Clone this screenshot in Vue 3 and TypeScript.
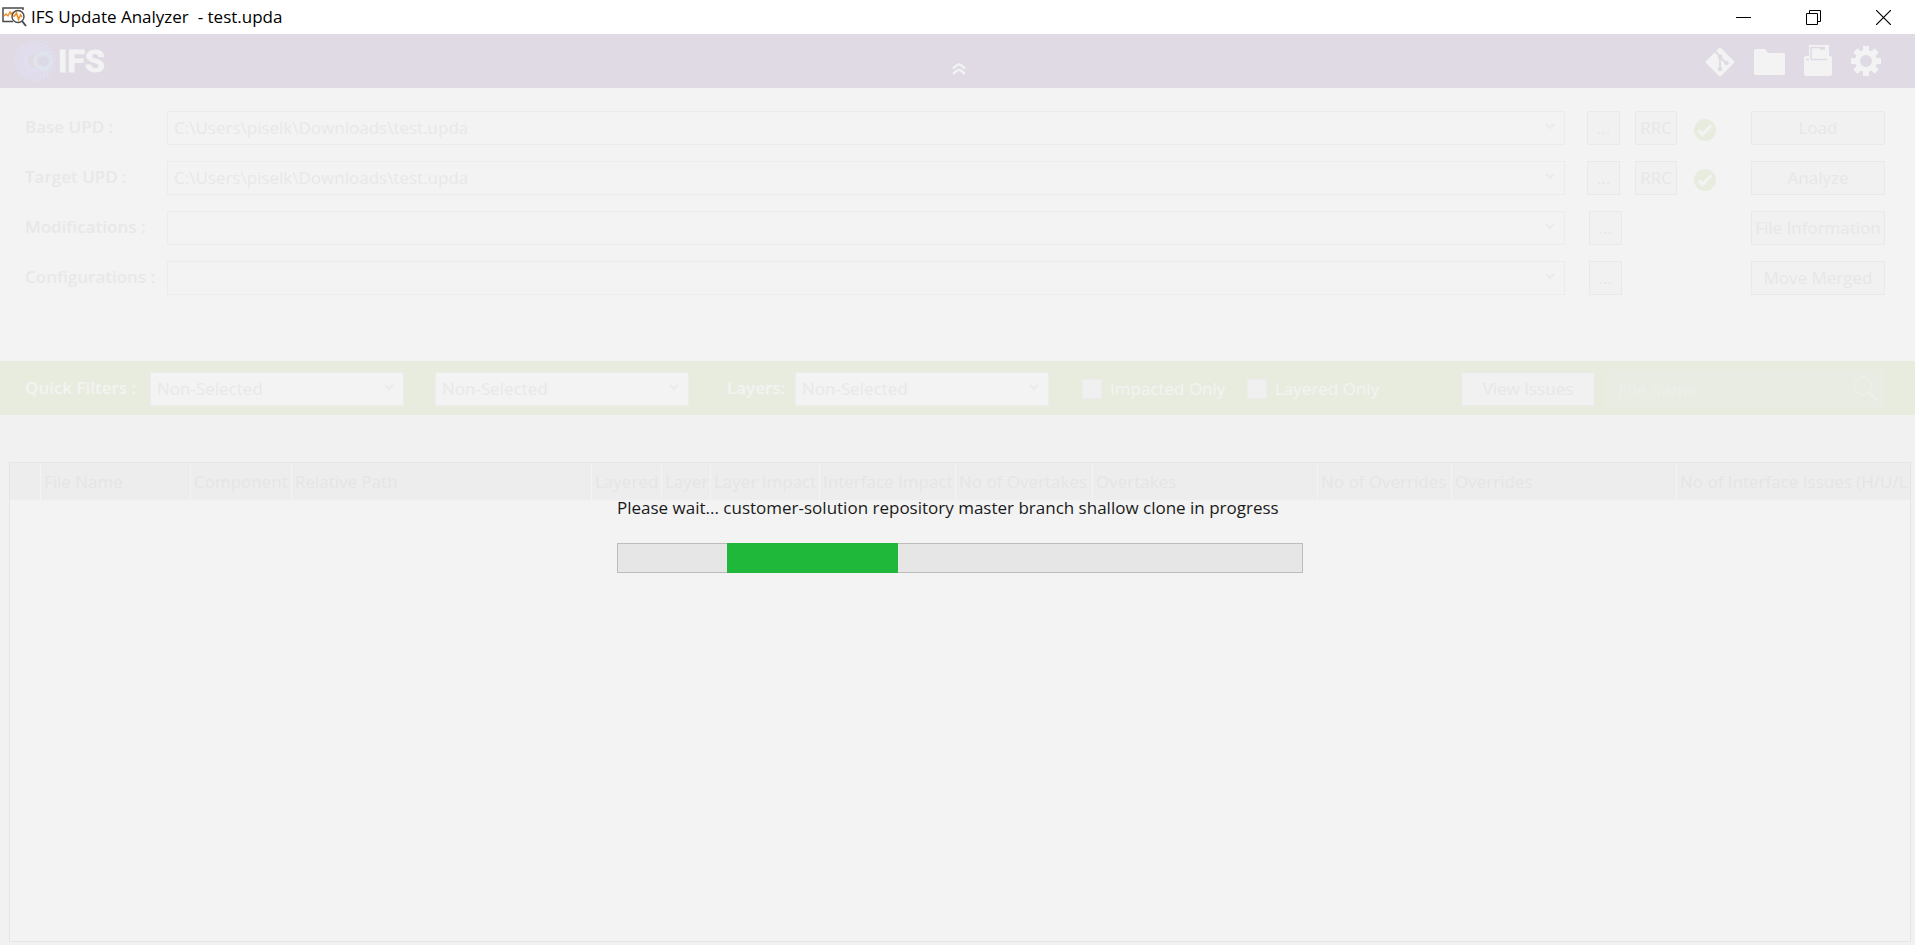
<script setup lang="ts">
import { ref } from 'vue'

interface PathRow {
  id: string
  label: string
  value: string
  release: string
}

interface Column {
  title: string
  width: string
}

const windowTitle = 'IFS Update Analyzer  - test.upda'

const rows: PathRow[] = [
  { id: 'base', label: 'Base UPD :', value: 'C:\\Users\\piselk\\Downloads\\test.upda', release: 'RRC' },
  { id: 'target', label: 'Target UPD :', value: 'C:\\Users\\piselk\\Downloads\\test.upda', release: 'RRC' },
  { id: 'modifications', label: 'Modifications :', value: '', release: '' },
  { id: 'configurations', label: 'Configurations :', value: '', release: '' },
]

const actions: string[] = ['Load', 'Analyze', 'File Information', 'Move Merged']

const columns: Column[] = [
  { title: '', width: '31px' },
  { title: 'File Name', width: '150px' },
  { title: 'Component', width: '101px' },
  { title: 'Relative Path', width: '300px' },
  { title: 'Layered', width: '70px' },
  { title: 'Layer', width: '49px' },
  { title: 'Layer Impact', width: '109px' },
  { title: 'Interface Impact', width: '136px' },
  { title: 'No of Overtakes', width: '137px' },
  { title: 'Overtakes', width: '225px' },
  { title: 'No of Overrides', width: '134px' },
  { title: 'Overrides', width: '225px' },
  { title: 'No of Interface Issues (H/U/L', width: 'auto' },
]

const rays: number[] = Array.from({ length: 28 }, (_, i) => (i * 360) / 28)
const teeth: number[] = [0, 45, 90, 135, 180, 225, 270, 315]

const fileName = ref('')
const impactedOnly = ref(false)
const layeredOnly = ref(false)
</script>

<template>
  <div class="window">
    <header class="titlebar">
      <svg class="app-icon" width="25" height="20" viewBox="0 0 25 20" fill="none">
        <path d="M11 14.500H1V1h20v2" stroke="#4a4a4a" stroke-width="1.500" />
        <path d="M2 9l2-2 2 2 2-4 1 2 2-2" stroke="#f08a1d" stroke-width="1.300" />
        <circle cx="16" cy="9.500" r="6" fill="#fff" stroke="#4a4a4a" stroke-width="1.400" />
        <path d="M20 14l4 5" stroke="#4a4a4a" stroke-width="2" />
        <path d="M11 9h1.500l2-3 2 6.500 2-4.500 1.500 2" stroke="#f08a1d" stroke-width="1.500" />
      </svg>
      <h1 class="title">{{ windowTitle }}</h1>
      <div class="window-buttons">
        <button type="button" aria-label="Minimize">
          <svg width="15" height="15" viewBox="0 0 15 15"><path d="M0 7.500h15" stroke="#000" /></svg>
        </button>
        <button type="button" aria-label="Restore">
          <svg width="15" height="15" viewBox="0 0 15 15" fill="none" stroke="#000">
            <path d="M.5 3.500h11v11H.5zM3.500 3.500v-3h11v11h-3" />
          </svg>
        </button>
        <button type="button" aria-label="Close">
          <svg width="15" height="15" viewBox="0 0 15 15"><path d="M0 0l15 15M15 0L0 15" stroke="#000" stroke-width="1.200" /></svg>
        </button>
      </div>
    </header>

    <div class="brandbar">
      <div class="logo">
        <svg width="42" height="42" viewBox="-21 -21 42 42">
          <path
            v-for="angle in rays"
            :key="angle"
            :transform="`rotate(${angle})`"
            d="M5 -5Q12 -9 20 -4"
            fill="none"
            stroke="#e2def0"
            stroke-width="2"
          />
          <circle cx="8" cy="0" r="8" fill="none" stroke="#dfe3ec" stroke-width="4" />
          <circle cx="9" cy="0" r="5" fill="#dcd9e6" />
        </svg>
        <span class="logo-text">IFS</span>
      </div>
      <button class="collapse" type="button" aria-label="Collapse">
        <svg width="14" height="12" viewBox="0 0 14 12" fill="none" stroke="#f3f3f3" stroke-width="2.500">
          <path d="M1 5.500Q6 1 7 1.500Q8 1 13 5.500M1 11Q6 6.500 7 7Q8 6.500 13 11" />
        </svg>
      </button>
      <div class="tools">
        <button class="git" type="button" aria-label="Git">
          <svg width="30" height="30" viewBox="0 0 30 30">
            <rect x="4.500" y="4.500" width="21" height="21" rx="1" transform="rotate(45 15 15)" fill="#f3f3f3" />
            <path d="M10 4l5 5.500v12.500M15 10l6 6" fill="none" stroke="#dfdae3" stroke-width="2" />
            <circle cx="15" cy="9.500" r="2.200" fill="#dfdae3" />
            <circle cx="15" cy="22" r="2.300" fill="#dfdae3" />
            <circle cx="21.500" cy="16" r="2.300" fill="#dfdae3" />
          </svg>
        </button>
        <button type="button" aria-label="Open folder">
          <svg width="31" height="26" viewBox="0 0 31 26">
            <path d="M2 0h9l3 4h15q2 0 2 2v18q0 2-2 2H2q-2 0-2-2V2q0-2 2-2z" fill="#f3f3f3" />
          </svg>
        </button>
        <button class="archive" type="button" aria-label="Archive">
          <svg width="28" height="31" viewBox="0 0 28 31">
            <path d="M5 0h20v11h1q2 0 2 2v16q0 2-2 2H2q-2 0-2-2V13q0-2 2-2h3z" fill="#f3f3f3" />
            <path d="M2 14.500h3M7 14.500h16M7 14V2.500h14M16 4h5" fill="none" stroke="#dfdae3" stroke-width="1.500" />
          </svg>
        </button>
        <button type="button" aria-label="Settings">
          <svg width="30" height="30" viewBox="-15 -15 30 30" fill="#f3f3f3">
            <path v-for="angle in teeth" :key="angle" :transform="`rotate(${angle})`" d="M-3 -15h6v6h-6z" />
            <circle r="8.500" fill="none" stroke="#f3f3f3" stroke-width="5" />
          </svg>
        </button>
      </div>
    </div>

    <section class="sources">
      <div class="rows">
        <div v-for="row in rows" :key="row.id" class="row">
          <label class="row-label" :for="row.id">{{ row.label }}</label>
          <div class="combo grow">
            <select :id="row.id">
              <option>{{ row.value }}</option>
            </select>
            <svg class="chevron" width="10" height="7" viewBox="0 0 10 7"><path d="M1 1l4 4 4-4" /></svg>
          </div>
          <div class="row-tools" :class="{ short: !row.release }">
            <button class="plain browse" type="button" :aria-label="`Browse ${row.label}`">...</button>
            <template v-if="row.release">
              <button class="plain release" type="button">{{ row.release }}</button>
              <svg class="ok" width="22" height="22" viewBox="0 0 22 22">
                <circle cx="11" cy="11" r="11" fill="#e8ecdf" />
                <path d="M4.500 11.500l4 4 8.500-9" fill="none" stroke="#f3f3f3" stroke-width="3.200" />
              </svg>
            </template>
          </div>
        </div>
      </div>
      <div class="actions">
        <button v-for="action in actions" :key="action" class="plain" type="button">{{ action }}</button>
      </div>
    </section>

    <section class="filters">
      <label class="filter-label quick" for="quick-one">Quick Filters :</label>
      <div class="combo filter">
        <select id="quick-one"><option>Non-Selected</option></select>
        <svg class="chevron" width="10" height="7" viewBox="0 0 10 7"><path d="M1 1l4 4 4-4" /></svg>
      </div>
      <div class="combo filter second">
        <select aria-label="Second quick filter"><option>Non-Selected</option></select>
        <svg class="chevron" width="10" height="7" viewBox="0 0 10 7"><path d="M1 1l4 4 4-4" /></svg>
      </div>
      <label class="filter-label layers" for="layers">Layers:</label>
      <div class="combo filter">
        <select id="layers"><option>Non-Selected</option></select>
        <svg class="chevron" width="10" height="7" viewBox="0 0 10 7"><path d="M1 1l4 4 4-4" /></svg>
      </div>
      <label class="check impacted"><input v-model="impactedOnly" type="checkbox" />Impacted Only</label>
      <label class="check"><input v-model="layeredOnly" type="checkbox" />Layered Only</label>
      <button class="plain view" type="button">View Issues</button>
      <div class="search">
        <input v-model="fileName" type="text" placeholder="File name" aria-label="File name" />
        <svg width="26" height="26" viewBox="0 0 26 26" fill="none" stroke="#edf0e8">
          <circle cx="10" cy="10" r="8.500" stroke-width="1.500" />
          <path d="M16 16l8 9" stroke-width="2.500" />
        </svg>
      </div>
    </section>

    <main class="results">
      <div class="grid">
        <table>
          <colgroup>
            <col v-for="column in columns" :key="column.title" :style="{ width: column.width }" />
          </colgroup>
          <thead>
            <tr>
              <th v-for="column in columns" :key="column.title" scope="col">{{ column.title }}</th>
            </tr>
          </thead>
        </table>
      </div>
    </main>

    <div class="overlay">
      <div class="progress-box" role="status">
        <p>Please wait... customer-solution repository master branch shallow clone in progress</p>
        <div class="track" role="progressbar" aria-label="Clone progress"><div class="chunk"></div></div>
      </div>
    </div>
  </div>
</template>

<style>
body {
  margin: 0;
}
</style>

<style scoped>
.window {
  position: relative;
  display: flex;
  flex-direction: column;
  box-sizing: border-box;
  min-height: 100vh;
  background: #f1f1f1;
  color: #e7e7e7;
  font-family: 'Open Sans', 'Noto Sans', sans-serif;
  font-size: 17px;
  line-height: 24px;
}

.window *,
.window *::before {
  box-sizing: border-box;
}

button,
select,
input {
  margin: 0;
  padding: 0;
  border: 0;
  border-radius: 0;
  background: none;
  color: inherit;
  font: inherit;
}

svg {
  display: block;
  flex: none;
}

.titlebar {
  display: flex;
  align-items: center;
  height: 34px;
  padding-left: 2px;
  background: #fff;
  color: #000;
}

.title {
  margin: 0 auto 0 4px;
  font-size: 17px;
  font-weight: 400;
  white-space: pre;
}

.window-buttons {
  display: flex;
}

.window-buttons button {
  display: grid;
  place-items: center;
  width: 70px;
  height: 34px;
}

.window-buttons button:last-child {
  width: 64px;
  margin-left: 3px;
}

.brandbar {
  display: grid;
  grid-template-columns: 1fr auto 1fr;
  align-items: center;
  height: 54px;
  padding: 0 34px 0 14px;
  background: #dfdae3;
  color: #f3f3f3;
}

.logo {
  display: flex;
  align-items: center;
  gap: 2px;
}

.logo-text {
  font-family: Roboto, sans-serif;
  font-size: 32px;
  font-weight: 700;
  line-height: 40px;
  -webkit-text-stroke: 1px #f3f3f3;
}

.collapse {
  padding: 16px 0 0 23px;
}

.tools {
  display: flex;
  justify-content: flex-end;
  align-items: center;
  gap: 19px;
}

.tools .git,
.tools button:nth-child(2) {
  padding-top: 2px;
}

.tools .archive {
  padding-bottom: 2px;
}

.sources {
  display: flex;
  align-items: flex-start;
  height: 273px;
  padding: 23px 30px 0 25px;
  background: #f3f3f3;
}

.rows {
  display: flex;
  flex: 1;
  flex-direction: column;
  gap: 16px;
}

.row {
  display: flex;
  align-items: center;
}

.row-label {
  width: 142px;
  padding-bottom: 2px;
  color: #e8e8e8;
  font-weight: 600;
}

.combo {
  position: relative;
}

.grow {
  flex: 1;
}

.combo select {
  display: block;
  width: 100%;
  height: 34px;
  padding: 0 30px 0 6px;
  border: 1px solid #ececec;
  background: #f3f3f3;
  color: #e8e8e8;
  appearance: none;
  opacity: 1;
}

.chevron {
  position: absolute;
  top: 12px;
  right: 10px;
  fill: none;
  stroke: #ebebeb;
  stroke-width: 2;
  pointer-events: none;
}

.row-tools {
  display: flex;
  align-items: center;
  width: 186px;
  padding-left: 22px;
}

.row-tools.short {
  padding-left: 24px;
}

.plain {
  height: 34px;
  border: 1px solid #e9e9e9;
  background: #f1f1f1;
  color: #e7e7e7;
  white-space: nowrap;
}

.browse {
  width: 33px;
}

.release {
  width: 42px;
  margin: 0 17px 0 15px;
}

.ok {
  margin-top: 4px;
}

.actions {
  display: flex;
  flex-direction: column;
  gap: 16px;
  width: 134px;
}

.filters {
  display: flex;
  align-items: center;
  height: 54px;
  padding: 2px 30px 0 25px;
  background: #e8ecdf;
  color: #f3f3f3;
}

.filter-label {
  flex: none;
  padding-bottom: 2px;
  font-weight: 600;
}

.quick {
  width: 125px;
}

.layers {
  width: 68px;
  margin-left: 38px;
}

.filter {
  width: 254px;
}

.second {
  margin-left: 31px;
}

.check {
  display: flex;
  align-items: center;
  gap: 8px;
  white-space: nowrap;
}

.check input {
  width: 20px;
  height: 20px;
  border: 1px solid #ececec;
  background: #f0f0f0;
  appearance: none;
}

.impacted {
  width: 165px;
  margin-left: 33px;
}

.view {
  width: 134px;
  margin: 0 10px 0 auto;
}

.search {
  display: flex;
  align-items: center;
  width: 280px;
  height: 38px;
  padding: 0 5px 0 12px;
  border: 1px solid #e9ece4;
  background: #e9ece3;
}

.search input {
  flex: 1;
  min-width: 0;
  height: 36px;
}

.search input::placeholder {
  color: #edeee9;
  font-weight: 600;
  opacity: 1;
}

.results {
  display: flex;
  flex: 1;
  padding: 47px 4px 3px 9px;
}

.grid {
  flex: 1;
  min-width: 0;
  overflow: hidden;
  border: 1px solid #e3e5e8;
  background: #f3f3f3;
}

table {
  width: 100%;
  border-collapse: separate;
  border-spacing: 0;
  table-layout: fixed;
}

th {
  height: 37px;
  padding: 0 0 0 3px;
  overflow: hidden;
  border-right: 1px solid #f3f3f3;
  background: #ededed;
  color: #e5e5e5;
  font-size: 17px;
  font-weight: 400;
  text-align: left;
  white-space: nowrap;
}

th:last-child {
  border-right: 0;
}

.overlay {
  position: absolute;
  inset: 34px 0 0;
  display: flex;
  justify-content: center;
  align-items: flex-start;
  padding: 462px 0 0 5px;
}

.progress-box {
  width: 686px;
  color: #1a1a1a;
}

.progress-box p {
  margin: 0 0 23px;
  white-space: nowrap;
}

.track {
  height: 30px;
  border: 1px solid #bcbcbc;
  background: #e6e6e6;
}

.chunk {
  width: 25%;
  height: 30px;
  margin: -1px 0 0 16%;
  background: #1fb83a;
}
</style>
